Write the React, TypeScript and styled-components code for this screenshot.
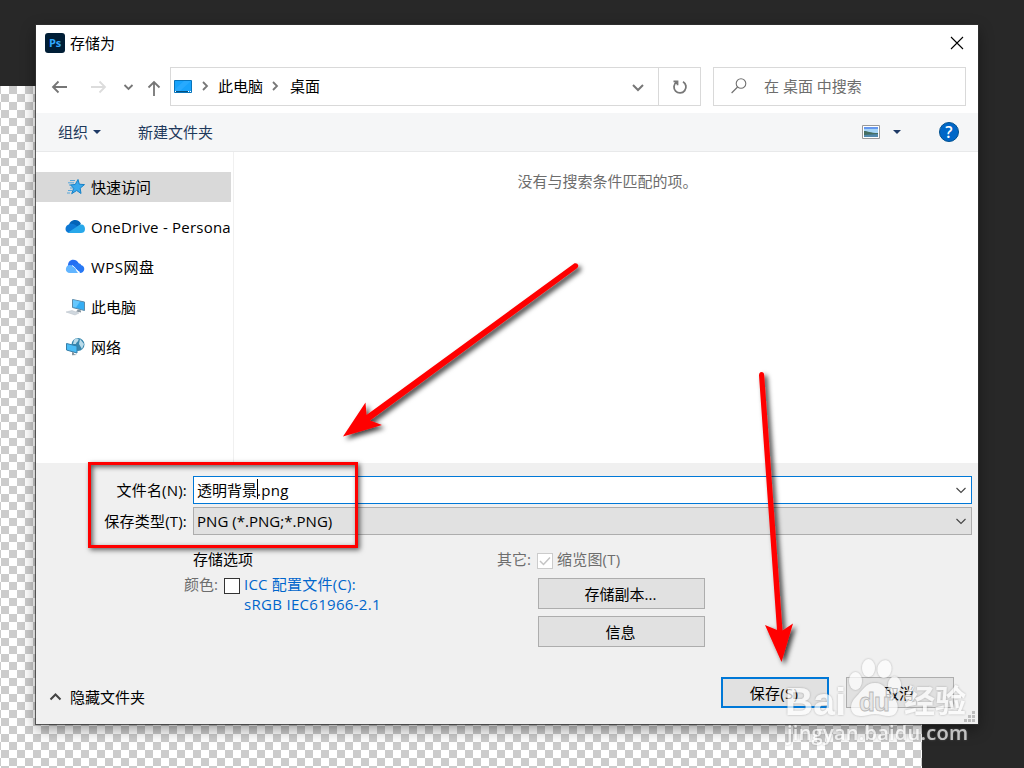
import React from 'react';
import styled, { createGlobalStyle, css } from 'styled-components';

const Global = createGlobalStyle`
  * { box-sizing: border-box; }
  body { margin: 0; overflow: hidden; }
`;

const Workspace = styled.div`
  position: relative;
  width: 1024px;
  height: 768px;
  overflow: hidden;
  background: #282828;
  padding: 25px 46px 0 36px;
  font-family: 'Open Sans', 'Noto Sans CJK SC', sans-serif;
  font-size: 15px;
  line-height: 20px;
  color: #000;
  white-space: nowrap;
`;

const Canvas = styled.div`
  position: absolute;
  left: 0;
  top: 86px;
  width: 922px;
  height: 682px;
  background: repeating-conic-gradient(#cccccc 0 25%, #fff 0 50%) 1px 0 / 16px 16px;
`;

const Dialog = styled.section`
  position: relative;
  display: flex;
  flex-direction: column;
  width: 942px;
  height: 699px;
  background: #fff;
  box-shadow: 0 0 0 1px rgba(50, 50, 50, 0.75), 0 5px 14px rgba(0, 0, 0, 0.42);
`;

const Label = styled.span<{ $size?: number; $track?: number; $color?: string }>`
  font-size: ${p => p.$size ?? 15}px;
  letter-spacing: ${p => p.$track ?? 0}px;
  color: ${p => p.$color ?? 'inherit'};
`;

const TitleBar = styled.header`
  display: flex;
  align-items: center;
  height: 36px;
  padding: 0 14px 0 9px;
  gap: 5px;
`;

const AppLogo = styled.span`
  display: flex;
  align-items: center;
  justify-content: center;
  width: 20px;
  height: 20px;
  border-radius: 3px;
  background: #001e36;
  color: #31a8ff;
  font-size: 11px;
  font-weight: 700;
  letter-spacing: -0.2px;
`;

const Spacer = styled.div`
  flex: 1;
`;

const NavBar = styled.nav`
  display: flex;
  height: 52px;
  padding: 6px 12px 7px 14px;
`;

const NavIcons = styled.div`
  width: 120px;
  height: 39px;
`;

const AddressBar = styled.div`
  display: flex;
  align-items: center;
  width: 531px;
  border: 1px solid #d9d9d9;
  padding-left: 3px;
`;

const Crumb = styled.span`
  width: 46px;
  line-height: 37px;
`;

const Refresh = styled.div`
  display: flex;
  align-items: center;
  justify-content: center;
  width: 42px;
  height: 37px;
  border-left: 1px solid #d9d9d9;
`;

const Search = styled.div`
  display: flex;
  align-items: center;
  width: 253px;
  margin-left: 12px;
  padding: 0 0 2px 16px;
  gap: 16px;
  border: 1px solid #d9d9d9;
  color: #6d6d6d;
`;

const Toolbar = styled.div`
  display: flex;
  align-items: center;
  height: 39px;
  padding: 0 19px 0 22px;
  background: #f5f6f7;
  border-bottom: 1px solid #e8e9ea;
  color: #1e395b;
`;

const Caret = styled.i`
  border: 4px solid transparent;
  border-top-color: #1e3a66;
  border-bottom: 0;
`;

const OrganizeButton = styled.div`
  display: flex;
  align-items: center;
  width: 80px;
  gap: 5px;
`;

const ViewButton = styled.div`
  display: flex;
  align-items: center;
  gap: 13px;
  margin-right: 38px;
`;

const Help = styled.span`
  display: flex;
  align-items: center;
  justify-content: center;
  width: 20px;
  height: 20px;
  border: 1px solid #00508f;
  border-radius: 50%;
  background: #0067c8;
  color: #fff;
  font-size: 16px;
  font-weight: 600;
`;

const Browser = styled.div`
  display: flex;
  height: 311px;
`;

const Sidebar = styled.aside`
  display: flex;
  flex-direction: column;
  gap: 10px;
  width: 198px;
  padding: 20px 2px 0 0;
  border-right: 1px solid #f0f0f0;
`;

const SideItem = styled.div<{ $selected?: boolean }>`
  display: flex;
  align-items: center;
  gap: 5px;
  height: 30px;
  padding-left: 29px;
  overflow: hidden;
  background: ${p => (p.$selected ? '#d9d9d9' : 'transparent')};
  svg { flex: none; }
`;

const FileArea = styled.main`
  flex: 1;
  padding: 19px 0 0 3px;
  text-align: center;
  color: #6d6d6d;
`;

const Footer = styled.footer`
  display: flex;
  flex-direction: column;
  height: 261px;
  padding: 13px 6px 0 0;
  background: #f0f0f0;
`;

const Field = styled.label`
  display: flex;
  align-items: center;
  height: 28px;
  margin-bottom: 3px;
`;

const FieldName = styled.span`
  width: 151px;
  margin-right: 6px;
  text-align: right;
`;

const Combo = styled.div<{ $active?: boolean }>`
  display: flex;
  align-items: center;
  flex: 1;
  height: 28px;
  padding: 0 4px 0 3px;
  border: 1px solid ${p => (p.$active ? '#0078d7' : '#adadad')};
  background: ${p => (p.$active ? '#fff' : '#e1e1e1')};
`;

const TextCursor = styled.i`
  width: 1px;
  height: 20px;
  margin: 0 -1px 2px 0;
  background: #000;
`;

const FileName = styled.span`
  display: flex;
  align-items: center;
  padding-bottom: 1px;
`;

const Options = styled.div`
  display: flex;
  height: 134px;
  padding-top: 11px;
`;

const ColorOptions = styled.div`
  width: 461px;
  padding-left: 148px;
`;

const OptionHeading = styled.div`
  padding-left: 9px;
  height: 25px;
`;

const OptionRow = styled.div`
  display: flex;
  align-items: center;
  height: 20px;
`;

const Profile = styled.div`
  padding-left: 60px;
  color: #0066cc;
`;

const Checkbox = styled.span<{ $disabled?: boolean }>`
  display: flex;
  align-items: center;
  justify-content: center;
  width: 16px;
  height: 16px;
  margin: 3px 4px 0 0;
  background: #fff;
  border: 1px solid ${p => (p.$disabled ? '#cccccc' : '#333')};
`;

const OtherOptions = styled.div`
  display: flex;
  flex-direction: column;
`;

const OptionLabel = styled.span<{ $width: number }>`
  width: ${p => p.$width}px;
  color: #6d6d6d;
`;

const Button = styled.button<{ $primary?: boolean; $wide?: boolean }>`
  display: flex;
  align-items: center;
  justify-content: center;
  width: ${p => (p.$wide ? 167 : 108)}px;
  height: 31px;
  padding: 0 2px 0 0;
  border: ${p => (p.$primary ? '2px solid #0078d7' : '1px solid #adadad')};
  background: #e1e1e1;
  color: #000;
  font: inherit;
  ${p => p.$wide && css`margin: 0 0 7px 41px;`}
`;

const ButtonStack = styled.div`
  padding-top: 9px;
`;

const Actions = styled.div`
  display: flex;
  align-items: center;
  height: 31px;
  margin-top: 5px;
  padding: 0 18px 0 13px;
`;

const HideFolders = styled.div`
  display: flex;
  align-items: center;
  gap: 8px;
  padding-top: 8px;
`;

const ActionButtons = styled.div`
  display: flex;
  gap: 17px;
`;

const Grip = styled.svg`
  position: absolute;
  right: 3px;
  bottom: 2px;
`;

const Highlight = styled.div`
  position: absolute;
  left: 88px;
  top: 462px;
  width: 270px;
  height: 86px;
  border: 3px solid #f00;
  box-shadow: 2px 2px 5px rgba(0, 0, 0, 0.6), inset 2px 2px 5px rgba(0, 0, 0, 0.6);
`;

const Overlay = styled.svg`
  position: absolute;
  inset: 0;
`;

const NavigationGlyphs = () => (
  <svg width="120" height="39" fill="none" stroke="#767676" strokeWidth="1.8">
    <path d="M17 20H3M8.500 14.500 3 20l5.500 5.500" />
    <path stroke="#dcdcdc" d="M41 20h14M49.500 14.500 55 20l-5.500 5.500" />
    <path strokeWidth="1.800" d="m74.500 18 4 4 4-4" />
    <path d="M104 29V15M98.500 20.500 104 15l5.500 5.500" />
  </svg>
);

const Chevron = () => (
  <svg width="8" height="12" fill="none" stroke="#777" strokeWidth="1.8">
    <path d="m1 1 4 4-4 4" />
  </svg>
);

const ComboArrow = () => (
  <svg width="12" height="8" fill="none" stroke="#444" strokeWidth="1.100">
    <path d="m1.500 2 4.500 4.500 4.500-4.500" />
  </svg>
);

const StarIcon = () => (
  <svg width="21" height="20" viewBox="0 0 21 20">
    <path d="m13 2.500 1.300 4.700 5.200.4-4.300 3.600.8 5.300-4.300-3-5 3.200 2-5.400-3.200-3.400 4.700-.4z" fill="#39a9ed" stroke="#1681c7" />
    <path d="M5 3.500h5M3 5.800h6M4 8h2M5 11h3M3 13.500h4M2 16h3" stroke="#3399dc" strokeWidth=".8" />
  </svg>
);

const OneDriveIcon = () => (
  <svg width="21" height="20" viewBox="0 0 21 20">
    <path d="M4 8C5 2 14 1 16 7l-6 5z" fill="#0364b8" />
    <path d="M5 16C-1 16-1 8 5 7c3-1 6 1 9 4L6 16z" fill="#0d78d4" />
    <path d="M3 15.500 13 9c4-3 7-1 7 3 0 3-2 4-4 4H5z" fill="#28a8ea" />
  </svg>
);

const WpsIcon = () => (
  <svg width="21" height="20" viewBox="0 0 21 20">
    <path d="M3 10C2 1 12 1 14 7l-2 6z" fill="#246ef2" />
    <path d="M5 16c-6 0-5-8 0-8 4 0 5 4 8 8z" fill="#62b5ff" />
    <path d="M15 16C12 13 11 11 8 9c3-4 8-3 8-1 5 1 4 8-1 8z" fill="#2878f4" />
    <path d="M7 8.500c3 1 4 5 8 7" fill="none" stroke="#eaf5ff" />
  </svg>
);

const ComputerIcon = () => (
  <svg width="21" height="20" viewBox="0 0 21 20">
    <path d="m7.500 2.500 12 2.500v8.500l-12-3z" fill="#35adf3" stroke="#5d8ba9" />
    <path d="m8 3 7 1.500-4 6-3-.8z" fill="#67c8fd" />
    <path d="m13 12.500 3 1v2l-5-1z" fill="#8996a0" />
    <path d="m1 15 6-1.500 7 2.500-4 2z" fill="#d0d8df" stroke="#b6bfc7" strokeWidth=".5" />
  </svg>
);

const NetworkIcon = () => (
  <svg width="21" height="20" viewBox="0 0 21 20">
    <circle cx="13" cy="7.500" r="6.500" fill="#3886ad" />
    <path d="M9 3c3-3 6-1 4 1-1 2-2 1-2 3H8zm6-1 4 5-2 5-3-5z" fill="#b9dbea" />
    <path d="m1.500 6.500 10.500 2.500v7L1.500 13z" fill="#4abcf5" stroke="#347ea9" />
    <path d="m7 15 2 .5v1.500l3 1-5 .3z" fill="#8796a0" />
  </svg>
);

const places = [
  { name: '快速访问', icon: <StarIcon />, selected: true },
  { name: 'OneDrive - Persona', icon: <OneDriveIcon />, track: 0.22 },
  { name: 'WPS网盘', icon: <WpsIcon />, track: 0.5 },
  { name: '此电脑', icon: <ComputerIcon /> },
  { name: '网络', icon: <NetworkIcon /> },
];

const Annotations = () => (
  <Overlay width="1024" height="768" viewBox="0 0 1024 768">
    <defs>
      <filter id="drop" x="-30%" y="-20%" width="200%" height="150%">
        <feDropShadow dx="3" dy="3" stdDeviation="2.500" floodOpacity=".75" />
      </filter>
    </defs>
    <g fill="#f00" stroke="none" filter="url(#drop)">
      <path d="M343 436.500 365.500 402.500 366.500 415 574.500 263.300Q577.500 262.500 578.300 265.500Q578.500 267 577 268.200L370 420.500 382 425z" />
      <path d="M781.500 662 765 625 777 630 759 375.500Q759 372 761.500 372Q764 372 764.200 375L782.500 630.500 793 623.500z" />
    </g>
  </Overlay>
);

const Watermark = () => (
  <Overlay width="1024" height="768" viewBox="0 0 1024 768">
    <defs>
      <filter id="edge" x="-10%" y="-10%" width="120%" height="120%">
        <feDropShadow dx="0" dy="0" stdDeviation="1" floodColor="#777" floodOpacity=".75" />
      </filter>
    </defs>
    <g fill="#fff" opacity=".72" filter="url(#edge)">
      <ellipse cx="855.500" cy="681" rx="6.500" ry="9" />
      <ellipse cx="868.500" cy="668" rx="6.500" ry="9" />
      <ellipse cx="884.500" cy="669" rx="7" ry="9" transform="rotate(10 884 669)" />
      <ellipse cx="894.500" cy="685" rx="6.500" ry="8.500" />
      <path d="M875 683c9 0 12 8 18 14 8 8 5 19-4 19-5 0-9-2-14-2s-9 2-14 2c-11 0-13-11-5-19 6-6 10-14 19-14z" />
      <text x="785" y="714.500" fontFamily="Liberation Sans, sans-serif" fontWeight="700" fontSize="39" textLength="61">Bai</text>
      <text x="904" y="712" fontFamily="Noto Sans CJK SC, sans-serif" fontWeight="700" fontSize="31" textLength="62">经验</text>
      <text x="787" y="739.500" fontFamily="Open Sans, sans-serif" fontWeight="600" fontSize="20" textLength="181">jingyan.baidu.com</text>
    </g>
    <text x="859" y="711" fill="#e6e6e6" stroke="#b8b8b8" strokeWidth=".8" fontFamily="Liberation Sans, sans-serif" fontWeight="700" fontSize="26" textLength="31">du</text>
  </Overlay>
);

export default function App() {
  return (
    <Workspace>
      <Global />
      <Canvas />
      <Dialog>
        <TitleBar>
          <AppLogo>Ps</AppLogo>
          <Label>存储为</Label>
          <Spacer />
          <svg width="14" height="14" stroke="#000" strokeWidth="1.100"><path d="m1 1 12 12M13 1 1 13" /></svg>
        </TitleBar>
        <NavBar>
          <NavIcons><NavigationGlyphs /></NavIcons>
          <AddressBar>
            <svg width="28" height="14">
              <path d="M.5.500h17v12H.5z" fill="#18a3fc" stroke="#0874bb" />
              <path d="M10 1h7L6 11H1V9z" fill="#38b1ff" opacity=".5" />
              <path d="M2 11.500h13" stroke="#06507e" />
              <path d="M1 11.500h1M14 11.500h1M16 11.500h1" stroke="#fff" />
            </svg>
            <Chevron />
            <svg width="8" height="1" />
            <Crumb>此电脑</Crumb>
            <svg width="8" height="1" />
            <Chevron />
            <svg width="10" height="1" />
            <Crumb>桌面</Crumb>
            <Spacer />
            <svg width="34" height="12" fill="none" stroke="#777" strokeWidth="2"><path d="m9 4 5 5 5-5" /></svg>
            <Refresh>
              <svg width="18" height="18" fill="none" stroke="#777" strokeWidth="1.800">
                <path d="M12 3.700a6 6 0 1 1-6.500.3M2.500 3.300h4v4" />
              </svg>
            </Refresh>
          </AddressBar>
          <Search>
            <svg width="18" height="18" fill="none" stroke="#707070" strokeWidth="1.100">
              <circle cx="11" cy="6.500" r="4.800" /><path d="m7.600 10-6 6" />
            </svg>
            <Label>在 桌面 中搜索</Label>
          </Search>
        </NavBar>
        <Toolbar>
          <OrganizeButton>组织<Caret /></OrganizeButton>
          <Label>新建文件夹</Label>
          <Spacer />
          <ViewButton>
            <svg width="18" height="14">
              <path d="M.5.500h17v13H.5z" fill="#fff" stroke="#999" />
              <path d="M2 2h14v10H2z" fill="#a6d5f5" />
              <path d="M2 2h14v2H2z" fill="#6597ee" />
              <path d="M2 6c4 0 6 2 14 2v2H2z" fill="#456e62" />
              <path d="M2 10 16 9v3H2z" fill="#5289ac" />
            </svg>
            <Caret />
          </ViewButton>
          <Help>?</Help>
        </Toolbar>
        <Browser>
          <Sidebar>
            {places.map(p => (
              <SideItem key={p.name} $selected={p.selected}>
                {p.icon}
                <Label $track={p.track}>{p.name}</Label>
              </SideItem>
            ))}
          </Sidebar>
          <FileArea>没有与搜索条件匹配的项。</FileArea>
        </Browser>
        <Footer>
          <Field>
            <FieldName><Label $track={0.2}>文件名(N):</Label></FieldName>
            <Combo $active>
              <FileName>透明背景<TextCursor /><Label $track={0.3}>.png</Label></FileName>
              <Spacer /><ComboArrow />
            </Combo>
          </Field>
          <Field>
            <FieldName><Label $track={0.2}>保存类型(T):</Label></FieldName>
            <Combo><Label $track={0.03}>PNG (*.PNG;*.PNG)</Label><Spacer /><ComboArrow /></Combo>
          </Field>
          <Options>
            <ColorOptions>
              <OptionHeading>存储选项</OptionHeading>
              <OptionRow>
                <OptionLabel $width={40}>颜色:</OptionLabel>
                <Checkbox />
                <Label $color="#0066cc" $track={0.22}>ICC 配置文件(C):</Label>
              </OptionRow>
              <Profile><Label $track={0.3}>sRGB IEC61966-2.1</Label></Profile>
            </ColorOptions>
            <OtherOptions>
              <OptionRow>
                <OptionLabel $width={40}>其它:</OptionLabel>
                <Checkbox $disabled>
                  <svg width="12" height="12" fill="none" stroke="#c4c4c4" strokeWidth="1.500"><path d="m1 6 3.500 3.500L11 2.500" /></svg>
                </Checkbox>
                <OptionLabel $width={70}><Label $track={0.2}>缩览图(T)</Label></OptionLabel>
              </OptionRow>
              <ButtonStack>
                <Button $wide>存储副本...</Button>
                <Button $wide>信息</Button>
              </ButtonStack>
            </OtherOptions>
          </Options>
          <Actions>
            <HideFolders>
              <svg width="13" height="10" fill="none" stroke="#444" strokeWidth="2"><path d="m1.500 7.500 5-5 5 5" /></svg>
              <span>隐藏文件夹</span>
            </HideFolders>
            <Spacer />
            <ActionButtons>
              <Button $primary><Label $track={0.3}>保存(S)</Label></Button>
              <Button>取消</Button>
            </ActionButtons>
          </Actions>
        </Footer>
        <Grip width="11" height="11" fill="#bdbdbd">
          <path d="M8 0h3v3H8zM4 4h3v3H4zM8 4h3v3H8zM0 8h3v3H0zM4 8h3v3H4zM8 8h3v3H8z" />
        </Grip>
      </Dialog>
      <Highlight />
      <Annotations />
      <Watermark />
    </Workspace>
  );
}
